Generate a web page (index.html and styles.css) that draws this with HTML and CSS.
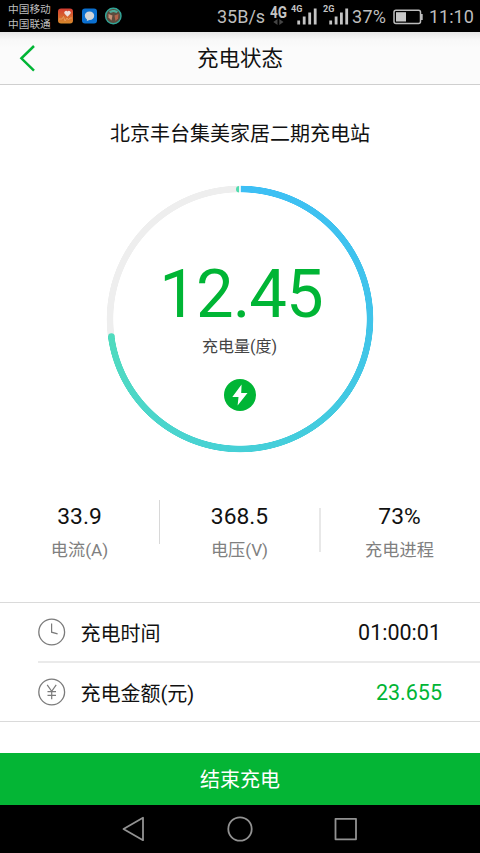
FILE: index.html
```html
<!DOCTYPE html>
<html lang="zh-CN">
<head>
<meta charset="utf-8">
<title>充电状态</title>
<link rel="stylesheet" href="styles.css">
</head>
<body>
<div class="statusbar">
  <div class="carriers"><span>中国移动</span><span>中国联通</span></div>
  <svg class="apps" width="66" height="18" viewBox="0 0 66 18">
    <defs><linearGradient id="health" x1="0" y1="0" x2="0" y2="1"><stop offset="0" stop-color="#d43c31"/><stop offset="1" stop-color="#d88a2c"/></linearGradient></defs>
    <rect x="1" y="1.5" width="15" height="15" rx="3" fill="url(#health)"/>
    <path d="M10.5 9.8 7.6 6.8a1.8 1.8 0 0 1 2.9-2.2 1.8 1.8 0 0 1 2.9 2.2Z" fill="#eee0dc"/>
    <path d="M2 12h3l1.5-2.5L8 14l2-3 1.5 2L13 11h2" fill="none" stroke="#e9a566" stroke-width=".8"/>
    <rect x="25" y="1.5" width="15" height="15" rx="3" fill="#0b70d0"/>
    <path d="M32.500 4.600c2.800 0 4.700 1.800 4.700 4.200s-1.900 4.200-4.700 4.200l-2.700 1 .2-1.600a4.300 4.300 0 0 1-2.200-3.600c0-2.400 1.900-4.200 4.700-4.200Z" fill="#d0d4d7"/>
    <circle cx="56.300" cy="9" r="7.700" fill="#5d4c3e" stroke="#31a698" stroke-width="1.400"/>
    <path d="M52 4.500c2-2 7-2 9 0l-1.500 1.500-3-1-3 1Z" fill="#4fab98"/>
    <path d="m51.500 7 4 1.500-1 5-3-3Z" fill="#c69277"/>
    <path d="m57.500 8.500 4-1.500-.5 4.500-2.500 2.500Z" fill="#b3644a"/>
  </svg>
  <span class="speed">35B/s</span>
  <svg class="signals" width="80" height="32" viewBox="0 0 80 32">
    <g fill="#c4c4c4">
      <text class="net-main" x="0" y="17.700" textLength="17" lengthAdjust="spacingAndGlyphs">4G</text>
      <text class="net" x="21" y="11.800">4G</text>
      <text class="net" x="53" y="11.800">2G</text>
      <path d="M27.300 20.500h2.800v4h-2.800zM32.800 16.500h2.800v8h-2.800zM38.300 12.500h2.800v12h-2.800zM43.800 8.500h2.800v16h-2.800z"/>
      <path d="M59.300 20.500h2.800v4h-2.800zM64.700 16.500h2.800v8h-2.800zM70 12.500h2.800v12h-2.800zM75.300 8.500h2.800v16h-2.800z"/>
    </g>
    <path d="M7.500 19v6L3.300 22zM9.300 19v6l4.200-3z" fill="#454545"/>
  </svg>
  <span class="percent">37%</span>
  <svg class="battery" width="31" height="16" viewBox="0 0 31 16"><rect x="1" y="1.200" width="26.500" height="13.300" rx="2" fill="none" stroke="#bcbcbc" stroke-width="1.500"/><path d="M28 5h1.700v6H28z" fill="#bcbcbc"/><path d="M3 3.200h10v9.300H3z" fill="#c8c8c8"/></svg>
  <span class="clock">11:10</span>
</div>
<header class="header">
  <svg class="back" width="18" height="28" viewBox="0 0 18 28"><path d="M15 2 2.400 14.300 15 26.600" fill="none" stroke="#00b535" stroke-width="2.500"/></svg>
  <h1>充电状态</h1>
</header>
<main>
  <h2 class="station">北京丰台集美家居二期充电站</h2>
  <section class="gauge">
    <div class="ring"></div>
    <svg class="caps" width="268" height="268" viewBox="0 0 268 268">
      <path d="M133.300.9a3.200 3.200 0 0 0 0 6.500z" fill="#50dcae"/>
      <path d="M133.300 0h1.500v8h-1.500z" fill="#fff"/>
      <circle cx="5.400" cy="151.500" r="3.250" fill="#50dbbe"/>
    </svg>
    <div class="amount">12.45</div>
    <div class="unit">充电量(度)</div>
    <svg class="bolt" width="32" height="32" viewBox="0 0 32 32"><circle cx="16" cy="16" r="16" fill="#00b535"/><path d="M17.600 5.500 8.300 18h6.200l-.9 8.500L23.500 14h-6.300Z" fill="#fff"/></svg>
  </section>
  <section class="stats">
    <div class="stat"><b>33.9</b><span>电流(A)</span></div>
    <div class="stat"><b>368.5</b><span>电压(V)</span></div>
    <div class="stat"><b>73%</b><span>充电进程</span></div>
  </section>
  <section class="list">
    <div class="row">
      <svg width="28" height="28" viewBox="0 0 28 28" fill="none" stroke="#7b7b7b"><circle cx="13.700" cy="14" r="12.900" stroke-width="1.300"/><path d="M13.600 5.500v8.700l6 1.600" stroke-width="1.200"/></svg>
      <span class="label">充电时间</span><span class="value">01:00:01</span>
    </div>
    <div class="row">
      <svg width="28" height="28" viewBox="0 0 28 28" fill="none" stroke="#7b7b7b"><circle cx="13.700" cy="14" r="12.900" stroke-width="1.300"/><path d="m9.200 6.800 4.500 6.500 4.500-6.500M13.700 13.300v7.900M9.500 13.700H18M9.500 17.300H18" stroke-width="1.200"/></svg>
      <span class="label">充电金额(元)</span><span class="value green">23.655</span>
    </div>
  </section>
</main>
<button class="stop">结束充电</button>
<nav class="nav">
  <svg width="24" height="26" viewBox="0 0 24 26"><path d="M21 1.800v22.400L1.500 13Z"/></svg>
  <svg width="26" height="26" viewBox="0 0 26 26"><circle cx="13" cy="13" r="11.700"/></svg>
  <svg width="24" height="26" viewBox="0 0 24 26"><rect x="1.500" y="2.800" width="20.500" height="20.500"/></svg>
</nav>
</body>
</html>
```
FILE: styles.css
```css
* { box-sizing: border-box; }
body {
  margin: 0;
  width: 480px;
  height: 853px;
  overflow: hidden;
  display: flex;
  flex-direction: column;
  background: #fff;
  color: #111;
  font-family: Roboto, "Noto Sans CJK SC", sans-serif;
}
svg { display: block; flex: none; }
h1, h2 { margin: 0; font-weight: 400; }

.statusbar {
  height: 32px;
  flex: none;
  display: flex;
  align-items: center;
  background: #000;
  color: #bebebe;
  padding-left: 8px;
  white-space: nowrap;
  font-size: 18px;
}
.carriers {
  display: flex;
  flex-direction: column;
  width: 48px;
  font-size: 10.7px;
  line-height: 15px;
  padding-top: 1px;
}
.speed { width: 53px; margin-left: 94px; }
.net-main { font-size: 16.5px; font-weight: 700; }
.net { font-size: 9px; font-weight: 700; }
.percent { width: 40px; margin-left: 2px; letter-spacing: 0.3px; }
.apps { margin-left: 1px; }
.battery { margin-left: 1px; margin-top: 1px; }
.clock { margin-left: 5px; }

.header {
  height: 53px;
  flex: none;
  display: flex;
  align-items: center;
  padding-left: 19px;
  border-bottom: 1px solid #cfcfcf;
  background: linear-gradient(#e6e6e6, #f8f8f8 8px, #fbfbfb 16px);
}
.header h1 { flex: 1; text-align: center; padding: 2px 37px 0 0; font-size: 21.5px; line-height: 30px; }

main { flex: 1; display: flex; flex-direction: column; }
.station { margin-top: 34px; text-align: center; font-size: 20px; line-height: 30px; }

.gauge {
  position: relative;
  width: 268px;
  height: 268px;
  margin: 36px auto 0;
  display: flex;
  flex-direction: column;
  align-items: center;
}
.ring, .caps { position: absolute; inset: 0; }
.ring {
  border-radius: 50%;
  background: conic-gradient(#3dbff5 0%, #40c4ea 25%, #46d0d7 50%, #50dbbe 73%, #eee 73%);
  -webkit-mask: radial-gradient(circle, transparent 126.400px, #000 127px, #000 133px, transparent 133.600px);
  mask: radial-gradient(circle, transparent 126.400px, #000 127px, #000 133px, transparent 133.600px);
}
.amount { margin-top: 69px; padding-left: 2px; color: #00b535; font-size: 67px; letter-spacing: -1px; line-height: 80px; }
.unit { margin-top: 1px; margin-right: 1px; color: #444; font-size: 16px; line-height: 24px; }
.bolt { margin-top: 20px; }

.stats { display: flex; margin-top: 47px; height: 52px; }
.stat { flex: 1; display: flex; flex-direction: column; align-items: center; position: relative; padding: 1px 1px 0 0; }
.stat b { font-weight: 400; font-size: 22.8px; line-height: 32px; }
.stat span { font-size: 17.2px; line-height: 26px; color: #808080; margin-top: 4px; }
.stat + .stat::before {
  content: "";
  position: absolute;
  left: -1px;
  top: 0;
  width: 1px;
  height: 44px;
  background: #d8d8d8;
}
.stat:last-child::before { top: 8px; left: -1px; width: 2px; background: #e8e8e8; }

.list { margin-top: 50px; border-top: 1px solid #dadada; border-bottom: 1px solid #dadada; }
.row { display: flex; align-items: center; height: 58px; margin-left: 38px; padding-right: 39px; }
.row + .row { height: 60px; border-top: 2px solid #eaeaea; }
.label { flex: 1; margin-left: 14.5px; padding-top: 1px; font-size: 20px; }
.value { font-size: 21.5px; padding-top: 1px; }
.green { color: #00b535; margin-right: -1px; }

.stop {
  height: 52px;
  flex: none;
  border: 0;
  padding: 2px 0 0;
  background: #04b535;
  color: #fff;
  font: 400 20px/50px Roboto, "Noto Sans CJK SC", sans-serif;
}
.nav {
  height: 48px;
  flex: none;
  display: flex;
  align-items: center;
  justify-content: space-between;
  padding: 0 122px 0 122px;
  background: #000;
}
.nav svg { fill: none; stroke: #929292; stroke-width: 1.8; stroke-linejoin: round; }
```
